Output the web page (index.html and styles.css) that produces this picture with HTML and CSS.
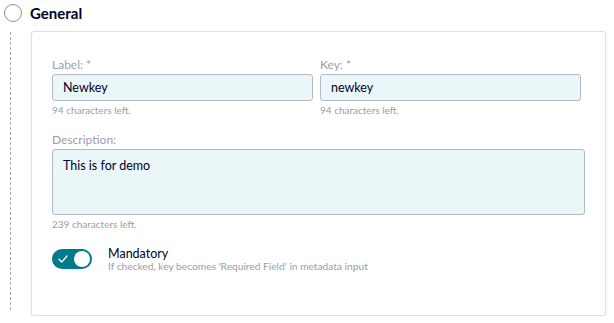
FILE: index.html
```html
<!DOCTYPE html>
<html lang="en">

<head>
  <meta charset="UTF-8">
  <meta name="viewport" content="width=device-width, initial-scale=1.0">
  <title>Metadata key</title>
  <link rel="stylesheet" href="styles.css">
</head>

<body>
  <section class="step">
    <div class="step-header">
      <span class="step-circle"></span>
      <h2 class="step-title">General</h2>
    </div>

    <div class="step-body">
      <div class="rail"><div class="rail-line"></div></div>

      <div class="card">
        <div class="row">
          <div class="field">
            <label class="field-label" for="labelInput">Label: *</label>
            <input class="field-input" id="labelInput" type="text" value="Newkey">
            <div class="field-hint">94 characters left.</div>
          </div>
          <div class="field">
            <label class="field-label" for="keyInput">Key: *</label>
            <input class="field-input" id="keyInput" type="text" value="newkey">
            <div class="field-hint">94 characters left.</div>
          </div>
        </div>

        <div class="field field-wide">
          <label class="field-label" for="descInput">Description:</label>
          <textarea class="field-input field-area" id="descInput">This is for demo</textarea>
          <div class="field-hint">239 characters left.</div>
        </div>

        <div class="toggle-row">
          <label class="toggle">
            <input type="checkbox" checked>
            <span class="toggle-track">
              <svg class="toggle-check" width="10" height="8" viewBox="0 0 10 8">
                <path d="M1 4.2 L3.8 7 L9 1" fill="none" stroke="#fff" stroke-width="1.3" stroke-linecap="round" stroke-linejoin="round"/>
              </svg>
              <span class="toggle-knob"></span>
            </span>
          </label>
          <div class="toggle-text">
            <div class="toggle-title">Mandatory</div>
            <div class="toggle-desc">If checked, key becomes 'Required Field' in metadata input</div>
          </div>
        </div>
      </div>
    </div>
  </section>
</body>

</html>
```

FILE: styles.css
```css
* {
  margin: 0;
  padding: 0;
  box-sizing: border-box;
}

body {
  font-family: 'Lato', 'Noto Sans', sans-serif;
  background: #fff;
  color: #000028;
}

.step-header {
  display: flex;
  align-items: center;
  gap: 8px;
  height: 26px;
  padding-left: 4px;
}

.step-circle {
  width: 18px;
  height: 18px;
  border: 1.5px solid #8c8f9a;
  border-radius: 50%;
}

.step-title {
  font-size: 15px;
  font-weight: 700;
  color: #000028;
}

.step-body {
  display: flex;
  margin-top: 5px;
}

.rail {
  width: 31px;
  padding-left: 10px;
  padding-bottom: 5px;
  margin-top: 1px;
}

.rail-line {
  width: 1px;
  height: 100%;
  background: repeating-linear-gradient(to bottom, #a3a6ae 0 3px, transparent 3px 5px);
}

.card {
  width: 575px;
  height: 285px;
  border: 1px solid #dfe0e3;
  border-radius: 3px;
  box-shadow: 0 1px 3px rgba(0, 0, 40, 0.08);
  padding: 26px 20px 0 20px;
  background: #fff;
}

.row {
  display: grid;
  grid-template-columns: 261px 261px;
  gap: 7px;
}

.field {
  display: flex;
  flex-direction: column;
}

.field-wide {
  margin-top: 16px;
  width: 533px;
}

.field-label {
  font-size: 12px;
  line-height: 14px;
  color: #9b9ea7;
  margin-bottom: 2px;
}

.field-input {
  height: 27px;
  border: 1px solid #b6bac3;
  border-radius: 3px;
  background: #ebf6f9;
  padding: 0 10px;
  font-family: inherit;
  font-size: 12.5px;
  color: #000028;
  outline: none;
}

.field-area {
  height: 66px;
  padding-top: 7px;
  resize: none;
  line-height: 18px;
}

.field-hint {
  font-size: 10px;
  line-height: 13px;
  color: #9b9ea7;
  margin-top: 3px;
}

.toggle-row {
  display: flex;
  gap: 16px;
  margin-top: 18px;
}

.toggle input {
  display: none;
}

.toggle-track {
  display: flex;
  align-items: center;
  justify-content: space-between;
  width: 40px;
  height: 20px;
  border-radius: 10px;
  background: #00798c;
  padding: 0 2px 0 6px;
}

.toggle-knob {
  width: 16px;
  height: 16px;
  border-radius: 50%;
  background: #fff;
}

.toggle-text {
  margin-top: -2px;
}

.toggle-title {
  font-size: 12.5px;
  line-height: 13px;
  color: #000028;
}

.toggle-desc {
  font-size: 10.2px;
  line-height: 12px;
  color: #9b9ea7;
}
```
